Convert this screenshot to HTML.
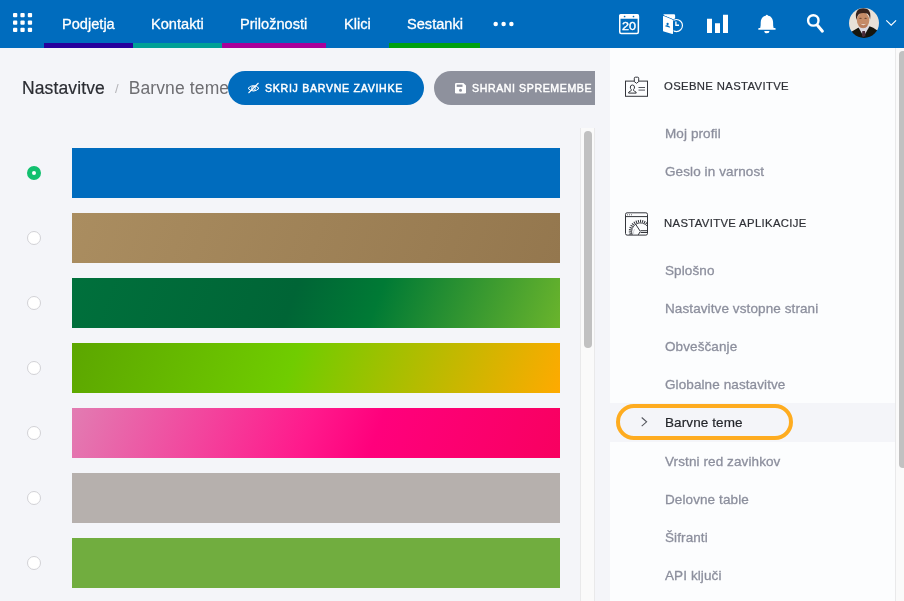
<!DOCTYPE html>
<html><head><meta charset="utf-8">
<style>
*{box-sizing:border-box;margin:0;padding:0}
html,body{width:904px;height:601px;overflow:hidden;background:#f4f5f9;font-family:"Liberation Sans",sans-serif;}
#hdr{position:absolute;left:0;top:0;width:904px;height:48px;background:#006cbe;}
.tab{position:absolute;top:0;height:48px;color:#fff;font-size:14.6px;line-height:46px;text-align:center;border-bottom:5px solid transparent;white-space:nowrap;-webkit-text-stroke:.3px #fff}
.tab span{display:inline-block;position:relative;top:.6px}
.tab span,.g{will-change:transform}
#main{position:absolute;left:0;top:48px;width:595px;height:553px;overflow:hidden}
.bc1{position:absolute;left:22px;top:30px;font-size:17.5px;letter-spacing:.12px;color:#2b2d33;line-height:20px;white-space:nowrap;-webkit-text-stroke:.2px #2b2d33}
.bar{position:absolute;left:72px;width:488px;height:50px}
.radio{position:absolute;left:27px;width:14px;height:14px;border-radius:50%;background:#fff;border:1px solid #d2d2d6}
.btn{position:absolute;top:23px;height:34px;border-radius:17px;color:#fff;font-size:10.6px;line-height:34px;white-space:nowrap;-webkit-text-stroke:.45px #fff}
#panel{position:absolute;left:610px;top:48px;width:285px;height:553px;background:#fcfdfe}
.mi{position:absolute;left:55px;margin-top:.6px;font-size:13.5px;letter-spacing:.1px;color:#8c8f9d;line-height:16px;white-space:nowrap;-webkit-text-stroke:.3px #8c8f9d}
.sh{position:absolute;left:54px;font-size:11.3px;color:#2e3036;letter-spacing:.36px;line-height:14px;white-space:nowrap;-webkit-text-stroke:.2px #2e3036}
svg{position:absolute;overflow:visible}
</style></head><body>
<div id="hdr">
  <svg style="left:13px;top:13px" width="20" height="20" viewBox="0 0 20 20" fill="#fff">
    <rect x="0" y="0" width="4.3" height="4.3" rx="1"/><rect x="7.4" y="0" width="4.3" height="4.3" rx="1"/><rect x="14.8" y="0" width="4.3" height="4.3" rx="1"/>
    <rect x="0" y="7.4" width="4.3" height="4.3" rx="1"/><rect x="7.4" y="7.4" width="4.3" height="4.3" rx="1"/><rect x="14.8" y="7.4" width="4.3" height="4.3" rx="1"/>
    <rect x="0" y="14.8" width="4.3" height="4.3" rx="1"/><rect x="7.4" y="14.8" width="4.3" height="4.3" rx="1"/><rect x="14.8" y="14.8" width="4.3" height="4.3" rx="1"/>
  </svg>
  <div class="tab" style="left:44px;width:89px;border-color:#27009c"><span>Podjetja</span></div>
  <div class="tab" style="left:133px;width:89px;border-color:#00a096"><span>Kontakti</span></div>
  <div class="tab" style="left:222px;width:104px;border-color:#a7009a"><span>Priložnosti</span></div>
  <div class="tab" style="left:326px;width:63px;"><span>Klici</span></div>
  <div class="tab" style="left:389px;width:91px;border-color:#00a00e"><span>Sestanki</span></div>
  <svg style="left:490px;top:18px" width="28" height="12" viewBox="0 0 28 12" fill="#fff"><circle cx="5.7" cy="5.9" r="2.25"/><circle cx="13.6" cy="5.9" r="2.25"/><circle cx="21.4" cy="5.9" r="2.25"/></svg>
  <!-- calendar -->
  <svg class="g" style="left:619px;top:14px" width="21" height="21" viewBox="0 0 21 21">
    <rect x="0.75" y=".9" width="18.6" height="18.55" rx="1.5" fill="none" stroke="#fff" stroke-width="1.5"/>
    <path d="M0 4.7 V2.1 Q0 .1 2 .1 H18.1 Q20.1 .1 20.1 2.1 V4.7 Z" fill="#fff"/>
    <circle cx="5.6" cy="2.5" r=".85" fill="#006cbe"/><circle cx="14.5" cy="2.5" r=".85" fill="#006cbe"/>
    <text x="3.05" y="15.9" font-family="Liberation Sans" font-size="10.6" fill="#fff" stroke="#fff" stroke-width=".35" textLength="14" lengthAdjust="spacingAndGlyphs">20</text>
  </svg>
  <!-- door clock -->
  <svg style="left:662px;top:14px" width="23" height="21" viewBox="0 0 23 21">
    <circle cx="14.4" cy="11.5" r="6.05" fill="none" stroke="#fff" stroke-width="1.15"/>
    <path d="M13.9 7.6 V11.2 H17" fill="none" stroke="#fff" stroke-width="1.35"/>
    <path d="M1.9 .15 H12 Q13.1 .15 13.1 1.3 V4.2 L11.6 5.4 L1.5 1.2 Q1.4 .15 1.9 .15 Z" fill="#fff"/>
    <path d="M.6 1 L11.6 5.6 V20.6 L.6 17.6 Z" fill="#006cbe"/>
    <path d="M1 2.6 Q1 1.7 1.8 2 L10.3 5.6 Q11 5.900 11 6.600 V19.300 Q11 20.200 10.200 20 L1.800 17.500 Q1 17.300 1 16.500 Z" fill="#fff"/>
    <circle cx="5.600" cy="10" r="1.150" fill="#006cbe"/>
    <path d="M3.100 12.300 Q3.300 10.900 5.600 11.300 Q8.100 11.900 8.200 13.800 Z" fill="#006cbe"/>
  </svg>
  <!-- bars -->
  <svg style="left:707px;top:14px" width="21" height="20" viewBox="0 0 21 20" fill="#fff">
    <rect x="0" y="4.75" width="5" height="14.25"/><rect x="8" y="9.25" width="5" height="9.75"/><rect x="16" y=".75" width="5" height="18.25"/>
  </svg>
  <!-- bell -->
  <svg style="left:758px;top:14px" width="18" height="20" viewBox="0 0 18 20" fill="#fff">
    <circle cx="8.9" cy="1.7" r="1"/>
    <path d="M2.1 14.5 C2.700 12.500 2.700 10.500 2.700 8.500 C2.700 4.300 5.300 1.500 8.900 1.500 C12.500 1.500 15.100 4.300 15.100 8.500 C15.100 10.500 15.100 12.500 15.700 14.500 Z"/>
    <rect x=".2" y="14" width="17.5" height="1.8" rx=".9"/>
    <path d="M6.3 16.9 H11.5 A2.6 2.3 0 0 1 6.3 16.9 Z"/>
  </svg>
  <!-- search -->
  <svg style="left:806px;top:13px" width="20" height="20" viewBox="0 0 20 20" fill="none" stroke="#fff">
    <circle cx="7.3" cy="7.4" r="5.2" stroke-width="2.4"/>
    <path d="M11.4 12.3 L16.4 18.2" stroke-width="3" stroke-linecap="round"/>
  </svg>
  <!-- avatar -->
  <svg style="left:849px;top:8px" width="30" height="30" viewBox="0 0 30 30">
    <defs><clipPath id="av"><circle cx="15" cy="15" r="15"/></clipPath><filter id="bl" x="-10%" y="-10%" width="120%" height="120%"><feGaussianBlur stdDeviation=".45"/></filter></defs>
    <g clip-path="url(#av)"><g filter="url(#bl)">
      <rect x="-2" y="-2" width="34" height="34" fill="#e8e1d8"/>
      <path d="M0 32 L2.500 23.800 Q8 20.500 11 18.800 L14.500 27 L19.800 18 Q24.500 19.300 28.300 22.500 L31 32 Z" fill="#17130f"/>
      <path d="M9.500 19.500 L14.600 28.500 L20.600 18.300 L17.500 16.500 L10.500 17 Z" fill="#dcdae2"/>
      <path d="M13.300 23 H16 L16.500 28.500 H12.900 Z" fill="#4a2a38"/>
      <ellipse cx="14.100" cy="12.400" rx="6.200" ry="7.800" fill="#c58b68"/>
      <path d="M7.300 12 Q5.800 4.500 9.300 1.600 Q13.500 -.6 18.200 1 Q22.300 3 21.100 11.600 Q20.600 7.200 18.600 5.700 Q14 4.200 10 5.900 Q8 7.600 7.300 12 Z" fill="#38211a"/><ellipse cx="11.500" cy="10.300" rx="1.300" ry=".6" fill="#4a2c1c" opacity=".7"/><ellipse cx="16.600" cy="10.300" rx="1.300" ry=".6" fill="#4a2c1c" opacity=".7"/><ellipse cx="14.100" cy="17.800" rx="4" ry="2" fill="#b0704f" opacity=".5"/>
      <path d="M11.300 15.700 Q14.300 18.600 17.300 15.700 Q14.300 16.700 11.300 15.700 Z" fill="#f7f1ec"/>
    </g></g>
  </svg>
  <svg style="left:885px;top:19px" width="12" height="8" viewBox="0 0 12 8" fill="none" stroke="#fff" stroke-width="1.15"><path d="M1.300 1.400 L6.200 6.100 L11.100 1.400"/></svg>
</div>
<div id="main">
  <div class="bc1 g">Nastavitve<span style="color:#b4b4b8;font-size:13px;padding:0 10px 0 10px;position:relative;top:-1px;-webkit-text-stroke:0">/</span><span style="color:#6e6e72;-webkit-text-stroke:0">Barvne teme</span></div>
  <div class="btn" style="left:228px;width:196px;background:#006cbe;padding-left:37px;letter-spacing:.71px"><span class="g" style="display:inline-block">SKRIJ BARVNE ZAVIHKE</span></div>
  <div class="btn" style="left:434px;width:200px;background:#8e919d;padding-left:37.7px;letter-spacing:.59px"><span class="g" style="display:inline-block">SHRANI SPREMEMBE</span></div>
  <!-- eye slash -->
  <svg style="left:247px;top:34px" width="13" height="12" viewBox="0 0 13 12" fill="none" stroke="#fff" stroke-width="1">
    <path d="M1 6.300 Q6.500 .8 12 6.300 Q6.500 11.800 1 6.300 Z"/><circle cx="6.500" cy="6.300" r="1.900"/><path d="M1.500 11 L11.500 1" stroke-width="1.100"/>
  </svg>
  <!-- save -->
  <svg style="left:454.500px;top:35px" width="11" height="10.500" viewBox="0 0 11 10.500">
    <path d="M1.300 0 H8.400 L11 2.600 V9.200 Q11 10.500 9.700 10.500 H1.300 Q0 10.500 0 9.200 V1.300 Q0 0 1.300 0 Z" fill="#fff"/>
    <rect x="1.700" y="1.600" width="5.800" height="2.300" fill="#8e919d"/><circle cx="5.500" cy="7.200" r="1.500" fill="#8e919d"/>
  </svg>
  <div class="bar" style="top:100px;background:#006cbe"></div>
  <div class="bar" style="top:165px;background:linear-gradient(110deg,#aa8d60,#94774e)"></div>
  <div class="bar" style="top:230px;background:linear-gradient(110deg,#00703c 0%,#006536 45%,#007a35 62%,#6ab42c 100%)"></div>
  <div class="bar" style="top:295px;background:linear-gradient(110deg,#5ca600 0%,#70cc00 45%,#ffaa00 100%)"></div>
  <div class="bar" style="top:360px;background:linear-gradient(110deg,#e27cb2 0%,#f2479e 26%,#ff1a8c 48%,#ff007c 62%,#f80060 100%)"></div>
  <div class="bar" style="top:425px;background:#b6b0ad"></div>
  <div class="bar" style="top:490px;background:#71ad3f"></div>
  <div class="radio" style="top:118px;background:#fff;border:5px solid #12c06f"></div>
  <div class="radio" style="top:183px"></div>
  <div class="radio" style="top:248px"></div>
  <div class="radio" style="top:313px"></div>
  <div class="radio" style="top:378px"></div>
  <div class="radio" style="top:443px"></div>
  <div class="radio" style="top:508px"></div>
  <div style="position:absolute;left:580px;top:80px;width:15px;height:480px;background:#fafafa;border-left:1px solid #e9e9ea;border-right:1px solid #e9e9ea;"></div>
  <div style="position:absolute;left:584px;top:83px;width:8px;height:217px;background:#c1c1c1;border-radius:4px"></div>
</div>
<div id="panel">
  <div style="position:absolute;left:0;top:355px;width:285px;height:39px;background:#f4f5f9"></div>
  <div style="position:absolute;left:6px;top:356px;width:177px;height:36px;border:4px solid #feac20;border-radius:18px"></div>
  <svg style="left:31px;top:369px" width="7" height="10" viewBox="0 0 7 10" fill="none" stroke="#55575e" stroke-width="1.100"><path d="M.7 .5 L5.600 4.800 L.7 9.100"/></svg>
  <!-- id badge -->
  <svg style="left:15px;top:28px" width="24" height="21" viewBox="0 0 24 21" fill="none" stroke="#33353b" stroke-width="1">
    <rect x=".5" y="5.100" width="22" height="15.200"/>
    <path d="M9.300 2.200 Q9.300 1.200 10.300 1.200 H12.700 Q13.700 1.200 13.700 2.200 V5.600 L11.500 7.300 L9.300 5.600 Z" fill="#fcfdfe"/>
    <path d="M3.600 17.100 Q3.300 15.800 5.300 15.200 Q6.700 14.700 6.300 13.600 Q5.200 12.500 5.300 11 Q5.500 9 7.400 9 Q9.300 9 9.500 11 Q9.600 12.500 8.500 13.600 Q8.100 14.700 9.500 15.200 Q11.500 15.800 11.200 17.100 Z"/>
    <path d="M13.500 11.500 H20 M13.500 14.100 H20" stroke="#55575e"/>
  </svg>
  <!-- gauge window -->
  <svg style="left:15px;top:164px" width="24" height="24" viewBox="0 0 24 24" fill="none" stroke="#33353b" stroke-width="1">
    <rect x=".5" y=".8" width="22" height="22.300" rx="1.600"/>
    <path d="M.5 4.600 H22.500"/>
    <path d="M2.200 2.800 H3 M4.100 2.800 H4.900 M6 2.800 H6.800" stroke-width=".9"/>
    <path d="M7.200 22.900 A8.800 8.800 0 0 1 22.500 14.500" stroke-width=".85"/>
    <path stroke-width="1.05" d="M20.62 12.27L22.22 10.22M19.06 11.29L20.20 8.95M17.33 10.66L17.96 8.14M15.51 10.41L15.60 7.81M13.67 10.53L13.22 7.97M11.90 11.04L10.93 8.63M10.28 11.90L8.83 9.75M8.87 13.09L7.00 11.28M7.74 14.54L5.53 13.16M6.93 16.19L4.49 15.30M6.49 17.98L3.91 17.61M6.42 19.81L3.83 20.00M6.74 21.63L4.24 22.34"/>
    <path d="M15.200 19.200 L10.500 12 M15.200 19.600 L13.200 22.900 M15.600 18.700 H22.500 M15.600 20.500 H22.500"/>
    <path d="M8.800 22.900 A7.200 7.200 0 0 1 9.600 17" stroke="#b5b7bd" stroke-width=".6"/>
  </svg>
  <div class="sh g" style="top:31px">OSEBNE NASTAVITVE</div>
  <div class="mi g" style="top:77px">Moj profil</div>
  <div class="mi g" style="top:115px">Geslo in varnost</div>
  <div class="sh g" style="top:168px">NASTAVITVE APLIKACIJE</div>
  <div class="mi g" style="top:214px">Splošno</div>
  <div class="mi g" style="top:252px">Nastavitve vstopne strani</div>
  <div class="mi g" style="top:290px">Obveščanje</div>
  <div class="mi g" style="top:328px">Globalne nastavitve</div>
  <div class="mi g" style="top:366px;color:#24262b;-webkit-text-stroke:.2px #24262b">Barvne teme</div>
  <div class="mi g" style="top:405px">Vrstni red zavihkov</div>
  <div class="mi g" style="top:443px">Delovne table</div>
  <div class="mi g" style="top:481px">Šifranti</div>
  <div class="mi g" style="top:519px">API ključi</div>
</div>
<div style="position:absolute;left:895px;top:48px;width:9px;height:553px;background:#fafafa;border-left:1px solid #e9e9ea"></div>
<div style="position:absolute;left:899px;top:51px;width:8px;height:417px;background:#c1c1c1;border-radius:4px"></div>
</body></html>
